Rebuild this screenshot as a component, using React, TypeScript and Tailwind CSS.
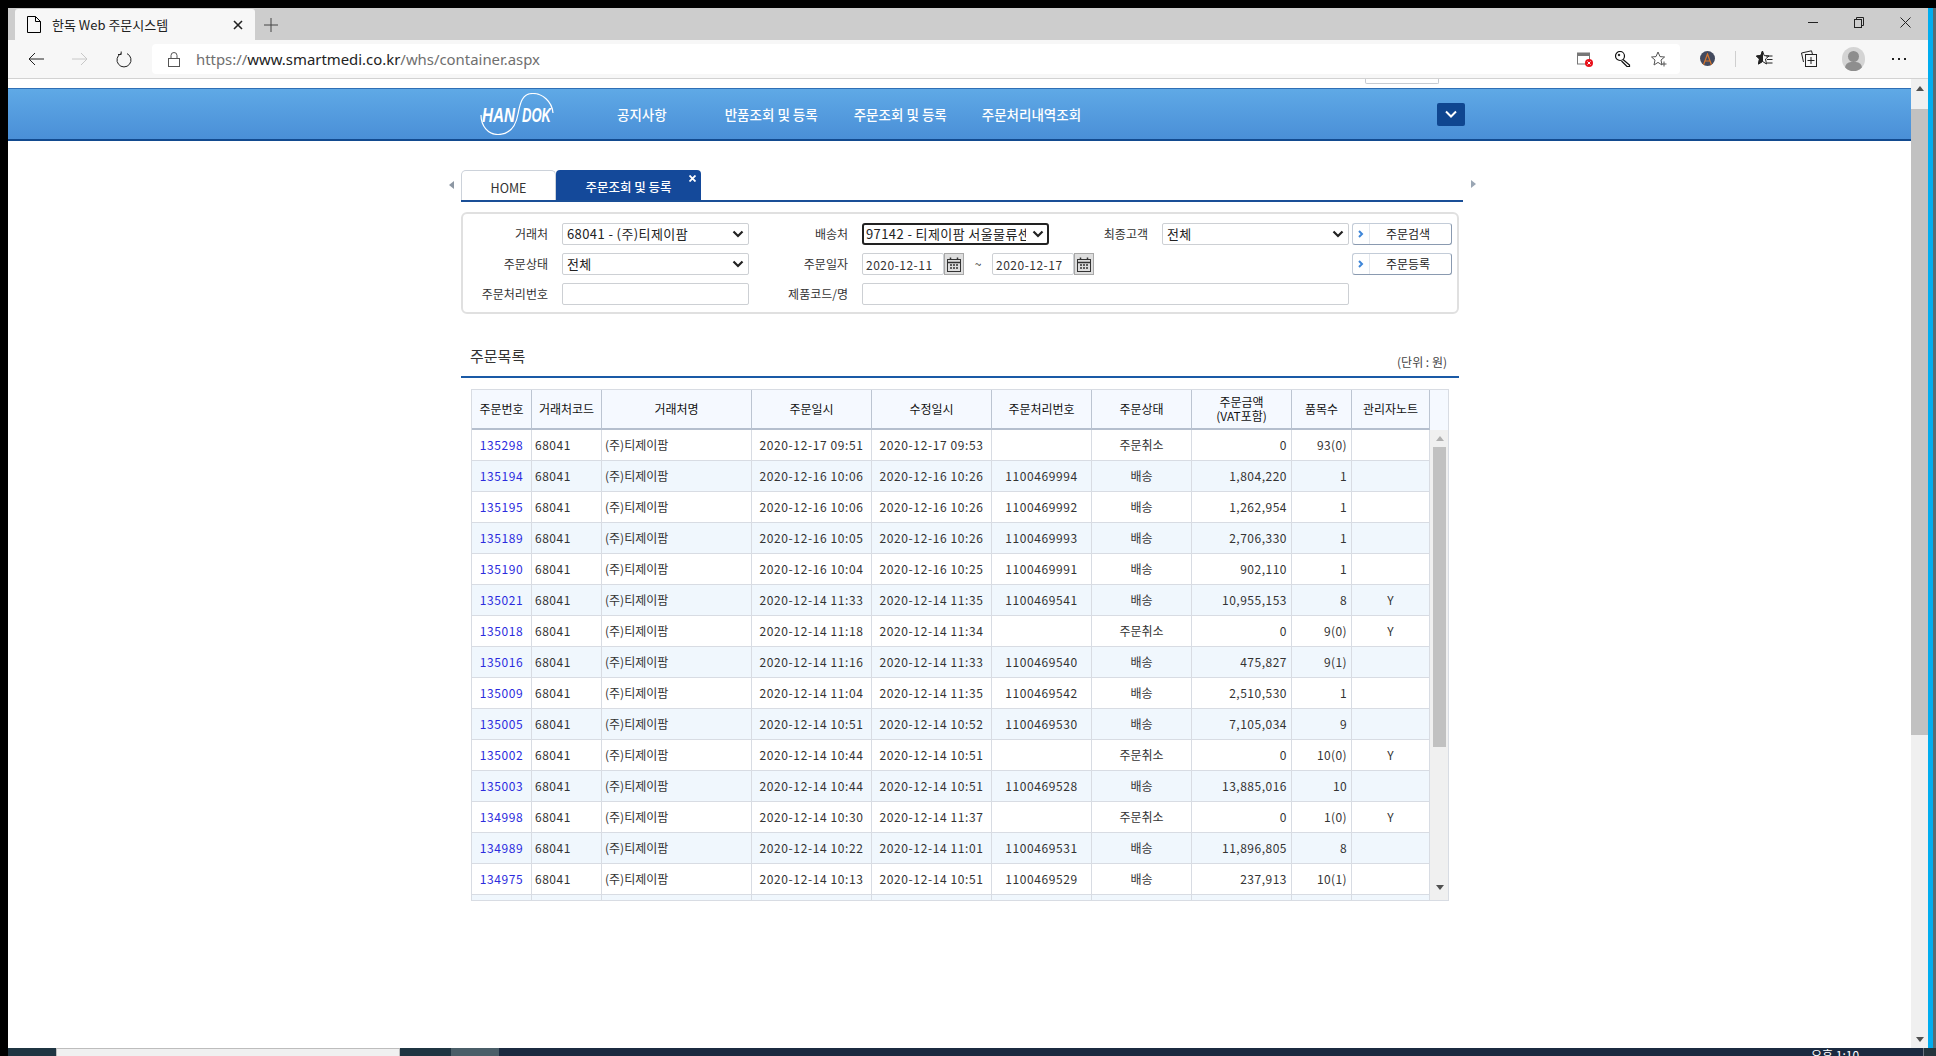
import React from "react";

type Row = [string, string, string, string, string, string, string, string];
const rows: Row[] = [
  ["135298", "2020-12-17 09:51", "2020-12-17 09:53", "", "주문취소", "0", "93(0)", ""],
  ["135194", "2020-12-16 10:06", "2020-12-16 10:26", "1100469994", "배송", "1,804,220", "1", ""],
  ["135195", "2020-12-16 10:06", "2020-12-16 10:26", "1100469992", "배송", "1,262,954", "1", ""],
  ["135189", "2020-12-16 10:05", "2020-12-16 10:26", "1100469993", "배송", "2,706,330", "1", ""],
  ["135190", "2020-12-16 10:04", "2020-12-16 10:25", "1100469991", "배송", "902,110", "1", ""],
  ["135021", "2020-12-14 11:33", "2020-12-14 11:35", "1100469541", "배송", "10,955,153", "8", "Y"],
  ["135018", "2020-12-14 11:18", "2020-12-14 11:34", "", "주문취소", "0", "9(0)", "Y"],
  ["135016", "2020-12-14 11:16", "2020-12-14 11:33", "1100469540", "배송", "475,827", "9(1)", ""],
  ["135009", "2020-12-14 11:04", "2020-12-14 11:35", "1100469542", "배송", "2,510,530", "1", ""],
  ["135005", "2020-12-14 10:51", "2020-12-14 10:52", "1100469530", "배송", "7,105,034", "9", ""],
  ["135002", "2020-12-14 10:44", "2020-12-14 10:51", "", "주문취소", "0", "10(0)", "Y"],
  ["135003", "2020-12-14 10:44", "2020-12-14 10:51", "1100469528", "배송", "13,885,016", "10", ""],
  ["134998", "2020-12-14 10:30", "2020-12-14 11:37", "", "주문취소", "0", "1(0)", "Y"],
  ["134989", "2020-12-14 10:22", "2020-12-14 11:01", "1100469531", "배송", "11,896,805", "8", ""],
  ["134975", "2020-12-14 10:13", "2020-12-14 10:51", "1100469529", "배송", "237,913", "10(1)", ""],
];

const widths = [60, 70, 150, 120, 120, 100, 100, 100, 60, 78];
const heads = ["주문번호", "거래처코드", "거래처명", "주문일시", "수정일시", "주문처리번호", "주문상태", "", "품목수", "관리자노트"];

const Stroke = ({ w, h, children, cls = "" }: { w: number; h: number; children: React.ReactNode; cls?: string }) => (
  <svg width={w} height={h} viewBox={`0 0 ${w} ${h}`} fill="none" stroke="currentColor" strokeWidth="1" className={`shrink-0 ${cls}`}>
    {children}
  </svg>
);

const Chevron = () => (
  <svg width="12" height="8" viewBox="0 0 12 8" fill="none" stroke="#222" strokeWidth="2.2" className="absolute right-[5px] top-[7px] pointer-events-none">
    <path d="M1.5 1.5 L6 6 L10.5 1.5" />
  </svg>
);

const Sel = ({ value, focus }: { value: string; focus?: boolean }) => (
  <div className="relative w-[187px] h-[22px]">
    <div
      role="combobox"
      className={`w-full h-full overflow-hidden whitespace-nowrap bg-white text-[13px] tracking-[0.4px] text-[#222] ${focus ? "border-2 border-[#222] pl-[2px] rounded-[3px] leading-[18px]" : "border border-[#cdd0d4] pl-[4px] rounded-[2px] leading-[20px]"}`}
    >
      <div className="w-[160px] overflow-hidden">{value}</div>
    </div>
    <Chevron />
  </div>
);

const Label = ({ w, children }: { w: string; children: React.ReactNode }) => (
  <div className={`${w} text-right text-[12px] text-[#333] pr-[14px] leading-[22px]`}>{children}</div>
);

const Txt = ({ w, value = "" }: { w: string; value?: string }) => (
  <input readOnly value={value} className={`${w} h-[22px] border border-[#cdd0d4] rounded-[2px] bg-white px-[3px] text-[12px] tracking-[0.5px] text-[#333]`} />
);

const Cal = () => (
  <div className="w-[20px] h-[22px] bg-[#dedede] border border-[#a8a8a8] flex items-center justify-center">
    <svg width="14" height="15" viewBox="0 0 14 15" fill="none" stroke="#333" strokeWidth="1">
      <rect x="0.5" y="2.5" width="13" height="12" />
      <path d="M0.5 5.5H13.5" strokeWidth="1.5" />
      <path d="M3.5 0.5V3M10.5 0.5V3" strokeWidth="1.5" />
      <path d="M3 8H5M6 8H8M9 8H11M3 11H5M6 11H8M9 11H11" strokeWidth="1.6" />
    </svg>
  </div>
);

const Btn = ({ children }: { children: React.ReactNode }) => (
  <div className="ml-[3px] w-[100px] h-[22px] border border-[#c3ccd8] border-b-[#8a9ab0] border-r-[#8a9ab0] rounded-[3px] flex bg-white">
    <div className="w-[17px] border-r border-[#e4e8ee] flex items-center justify-center">
      <svg width="6" height="8" viewBox="0 0 6 8" fill="none" stroke="#3f86d8" strokeWidth="2">
        <path d="M1 1 L4 4 L1 7" />
      </svg>
    </div>
    <div className="flex-1 text-center text-[12px] leading-[20px] text-[#222] pr-[5px]">{children}</div>
  </div>
);

const Tri = ({ up, color, w = 8, h = 5 }: { up?: boolean; color: string; w?: number; h?: number }) => (
  <svg width={w} height={h} viewBox="0 0 8 5" fill={color}>
    <path d={up ? "M4 0 L8 5 L0 5 Z" : "M0 0 L8 0 L4 5 Z"} />
  </svg>
);

export default function App() {
  return (
    <div className="flex w-[1936px] h-[1056px] overflow-hidden bg-black font-['Noto_Sans_CJK_KR','Noto_Sans',sans-serif]">
      <div className="w-[8px] shrink-0" />
      <div className="flex-1 flex flex-col min-w-0">
        <div className="h-[8px] shrink-0" />
        <div className="flex-1 flex min-h-0">
          <div className="w-[1920px] flex flex-col bg-white">
            {/* Tab strip */}
            <div className="h-[32px] bg-[#cdcdcd] flex items-end shrink-0">
              <div className="ml-[7px] w-[240px] h-[31px] bg-[#f7f7f7] rounded-t-[3px] flex items-center pl-[12px] text-black">
                <Stroke w={14} h={17}>
                  <path d="M0.5 0.5H8.5L13.5 5.5V16.5H0.5Z M8.5 0.5V5.5H13.5" />
                </Stroke>
                <span className="ml-[11px] text-[13px] leading-none text-[#222]">한독 Web 주문시스템</span>
                <svg width="10" height="10" viewBox="0 0 10 10" stroke="#222" strokeWidth="1.6" className="ml-auto mr-[12px]">
                  <path d="M1 1L9 9M9 1L1 9" />
                </svg>
              </div>
              <div className="ml-[9px] h-[31px] flex items-center text-[#444]">
                <Stroke w={14} h={14}>
                  <path d="M7 0V14M0 7H14" />
                </Stroke>
              </div>
            </div>
            {/* Toolbar */}
            <div className="h-[39px] bg-[#f7f7f7] border-b border-[#d2d2d2] flex items-start shrink-0">
              <div className="flex items-center h-[30px] mt-[4px] w-[144px] text-[#222]">
                <Stroke w={16} h={14} cls="ml-[20px]">
                  <path d="M16 7H1M7 1L1 7L7 13" />
                </Stroke>
                <Stroke w={16} h={14} cls="ml-[28px] text-[#c8c8c8]">
                  <path d="M0 7H15M9 1L15 7L9 13" />
                </Stroke>
                <Stroke w={16} h={17} cls="ml-[28px]">
                  <path d="M5 2.6A7 7 0 1 0 11 2.6M5.2 0.5V3.5H2" />
                </Stroke>
              </div>
              <div className="w-[1528px] h-[30px] mt-[4px] bg-white rounded-[4px] flex items-center">
                <Stroke w={12} h={15} cls="ml-[16px] text-[#555]">
                  <rect x="0.5" y="6.5" width="11" height="8" />
                  <path d="M3 6.5V3.5A3 3 0 0 1 9 3.5V6.5" />
                </Stroke>
                <div className="ml-[16px] text-[14.9px] leading-none font-['Noto_Sans',sans-serif] text-[#6f6f6f]">
                  https://<span className="text-[#222]">www.smartmedi.co.kr</span>/whs/container.aspx
                </div>
                <div className="ml-auto flex items-center text-[#555]">
                  <svg width="16" height="15" viewBox="0 0 16 15" className="mr-[22px]">
                    <rect x="0.5" y="1" width="12" height="11" fill="#fff" stroke="#777" />
                    <rect x="0" y="1" width="13" height="3" fill="#777" />
                    <circle cx="12" cy="11" r="4" fill="#e8101a" />
                    <path d="M10.5 9.5L13.5 12.5M13.5 9.5L10.5 12.5" stroke="#fff" />
                  </svg>
                  <Stroke w={16} h={16} cls="mr-[20px] text-[#111]">
                    <circle cx="5" cy="5" r="4.5" strokeWidth="1.2" />
                    <path d="M8 8.5L14.5 14V15.5H12L6.5 10" strokeWidth="1.2" />
                    <circle cx="4" cy="4" r="0.8" fill="currentColor" />
                  </Stroke>
                  <Stroke w={16} h={16} cls="mr-[13px]">
                    <path d="M7 1L9 5.6L13.6 6L10 9L11 14L7 11.4L3 14L4 9L0.5 6L5 5.6Z" />
                    <path d="M13 10.5V15.5M10.5 13H15.5" />
                  </Stroke>
                </div>
              </div>
              <div className="flex-1 h-[38px] relative flex items-center text-[#222]">
                <div className="ml-[20px] w-[15px] h-[15px] rounded-full bg-[#434a5e] flex items-center justify-center mt-[-1px]">
                  <svg width="11" height="12" viewBox="0 0 11 12" fill="none" stroke="#d9762b" strokeWidth="1.2">
                    <path d="M1.5 12L5.5 1L9.5 12M3 8H8" />
                  </svg>
                </div>
                <div className="ml-[20px] w-px h-[16px] bg-[#cfcfcf] mt-[-1px]" />
                <Stroke w={17} h={17} cls="ml-[20px] mt-[-1px]">
                  <path d="M6.5 1L8.2 5.6L13 6L9.5 9L10.5 14L6.5 11.4L2.5 14L3.5 9L0.5 6L4.8 5.6Z" />
                  <path d="M6.5 1V11.4L2.5 14L3.5 9L0.5 6L4.8 5.6Z" fill="#222" />
                  <path d="M10 6H16.5M11 9.5H16.5M11 13H16.5" />
                </Stroke>
                <Stroke w={16} h={17} cls="ml-[28px] mt-[-1px]">
                  <path d="M2.5 12L0.5 3L10.5 0.8L11.4 4" />
                  <rect x="4.5" y="4.5" width="11" height="12" fill="#f7f7f7" />
                  <path d="M10 7V14M6.5 10.5H13.5" />
                </Stroke>
                <div className="ml-[25px] w-[23px] h-[24px] rounded-[12px] bg-[#d4d4d4] overflow-hidden relative shrink-0">
                  <div className="absolute left-[6px] top-[4px] w-[11px] h-[11px] rounded-full bg-[#8e8e8e]" />
                  <div className="absolute left-[3px] top-[15px] w-[17px] h-[12px] rounded-full bg-[#8e8e8e]" />
                </div>
                <div className="ml-[27px] flex gap-[4px]">
                  <div className="w-[2px] h-[2px] bg-[#222]" />
                  <div className="w-[2px] h-[2px] bg-[#222]" />
                  <div className="w-[2px] h-[2px] bg-[#222]" />
                </div>
                {/* window controls lie over the tab strip */}
                <div className="absolute left-[128px] top-[-25px] flex items-center h-[14px] text-[#222]">
                  <Stroke w={10} h={11}>
                    <path d="M0 5.5H10" />
                  </Stroke>
                  <Stroke w={10} h={11} cls="ml-[36px]">
                    <rect x="0.5" y="2.5" width="7" height="8" />
                    <path d="M2.5 2.5V0.5H9.5V8.5H7.5" />
                  </Stroke>
                  <Stroke w={11} h={11} cls="ml-[36px]">
                    <path d="M0.5 0.5L10.5 10.5M10.5 0.5L0.5 10.5" />
                  </Stroke>
                </div>
              </div>
            </div>
            {/* Page */}
            <div className="flex-1 flex min-h-0">
              <div className="flex-1 min-w-0 overflow-hidden bg-white">
                <div className="h-[9px]">
                  <div className="ml-[1357px] w-[74px] h-[5px] border border-t-0 border-[#c8ccd2] rounded-b-[2px]" />
                </div>
                {/* Header band */}
                <div className="h-[53px] border-t border-[#2f6fb5] border-b-2 border-b-[#124a8f] bg-gradient-to-b from-[#5fa9e6] to-[#4a8fd7] flex items-center text-white">
                  <svg width="74" height="42" viewBox="0 0 74 42" fill="none" className="ml-[472px] mt-[-1px] shrink-0">
                    <path d="M73 20C72 8 62 0.5 53 0.5C41 0.5 40 12 38 21C36 32 31 41.5 18 41.5C8 41.5 1 33 1 22" stroke="#fff" strokeWidth="1.2" />
                    <text x="2" y="29" fill="#fff" fontFamily="Liberation Sans, sans-serif" fontStyle="italic" fontWeight="700" fontSize="20" textLength="33" lengthAdjust="spacingAndGlyphs">HAN</text>
                    <text x="42" y="29" fill="#fff" fontFamily="Liberation Sans, sans-serif" fontStyle="italic" fontWeight="700" fontSize="20" textLength="29" lengthAdjust="spacingAndGlyphs">DOK</text>
                  </svg>
                  <div className="ml-[63px] text-[13.5px] font-medium">공지사항</div>
                  <div className="ml-[58px] text-[13.5px] font-medium">반품조회 및 등록</div>
                  <div className="ml-[36px] text-[13.5px] font-medium">주문조회 및 등록</div>
                  <div className="ml-[35px] text-[13.5px] font-medium">주문처리내역조회</div>
                  <div className="ml-[356px] w-[28px] h-[23px] bg-[#0f4690] rounded-[2px] flex items-center justify-center">
                    <svg width="12" height="8" viewBox="0 0 12 8" fill="none" stroke="#fff" strokeWidth="2">
                      <path d="M1 1.5L6 6.5L11 1.5" />
                    </svg>
                  </div>
                </div>
                {/* Tabs */}
                <div className="mt-[31px] ml-[432px] flex items-center">
                  <div className="w-[13px] mt-[-4px] pl-[9px]">
                    <svg width="5" height="8" viewBox="0 0 5 8" fill="#8d97a3"><path d="M5 0V8L0 4Z" /></svg>
                  </div>
                  <div className="ml-[8px] w-[1002px] h-[30px] border-b-2 border-[#1a4f97] flex items-end">
                    <div className="w-[95px] h-[30px] border border-b-0 border-[#ccd2da] rounded-t-[5px] text-center text-[12.5px] leading-[33px] text-[#333]">HOME</div>
                    <div className="relative w-[145px] h-[30px] bg-[#14499a] rounded-t-[4px] text-center text-white text-[12.5px] font-medium leading-[33px]">
                      주문조회 및 등록
                      <svg width="7" height="7" viewBox="0 0 7 7" stroke="#fff" strokeWidth="1.8" className="absolute left-[133px] top-[5px]">
                        <path d="M0.5 0.5L6.5 6.5M6.5 0.5L0.5 6.5" />
                      </svg>
                    </div>
                  </div>
                  <div className="ml-[8px] mt-[-6px]">
                    <svg width="5" height="8" viewBox="0 0 5 8" fill="#9aa6b4"><path d="M0 0V8L5 4Z" /></svg>
                  </div>
                </div>
                {/* Search form */}
                <div className="mt-[10px] ml-[453px] w-[998px] h-[102px] border-2 border-[#e0e0e0] rounded-[6px] pt-[9px] flex flex-col gap-[8px]">
                  <div className="flex h-[22px]">
                    <Label w="w-[99px]">거래처</Label>
                    <Sel value="68041 - (주)티제이팜" />
                    <Label w="w-[113px]">배송처</Label>
                    <Sel value="97142 - 티제이팜 서울물류센터" focus />
                    <Label w="w-[113px]">최종고객</Label>
                    <Sel value="전체" />
                    <Btn>주문검색</Btn>
                  </div>
                  <div className="flex h-[22px]">
                    <Label w="w-[99px]">주문상태</Label>
                    <Sel value="전체" />
                    <Label w="w-[113px]">주문일자</Label>
                    <Txt w="w-[82px]" value="2020-12-11" />
                    <Cal />
                    <div className="w-[28px] text-center text-[12px] leading-[22px] text-[#333]">~</div>
                    <Txt w="w-[82px]" value="2020-12-17" />
                    <Cal />
                    <div className="w-[255px]" />
                    <Btn>주문등록</Btn>
                  </div>
                  <div className="flex h-[22px]">
                    <Label w="w-[99px]">주문처리번호</Label>
                    <Txt w="w-[187px]" />
                    <Label w="w-[113px]">제품코드/명</Label>
                    <Txt w="w-[487px]" />
                  </div>
                </div>
                {/* Section heading */}
                <div className="mt-[26px] ml-[453px] w-[998px] h-[38px] border-b-2 border-[#1a5aa6] flex items-end justify-between">
                  <div className="pl-[9px] pb-[10px] text-[15px] leading-[20px] text-[#333]">주문목록</div>
                  <div className="pr-[12px] pb-[6px] text-[12px] leading-[16px] text-[#444]">(단위 : 원)</div>
                </div>
                {/* Table */}
                <div className="mt-[11px] ml-[463px] w-[978px] h-[512px] border border-[#d8dce3] flex overflow-hidden">
                  <table className="table-fixed border-separate border-spacing-0 w-[958px] shrink-0 self-start text-[12px] text-[#333]">
                    <colgroup>
                      {widths.map((w, i) => (
                        <col key={i} style={{ width: w }} />
                      ))}
                    </colgroup>
                    <thead>
                      <tr>
                        {heads.map((h, i) => (
                          <th key={i} className="h-[40px] p-0 bg-[#f5f9ff] border-r border-r-[#bcc5d2] border-b-2 border-b-[#b5bfce] text-center font-normal text-[#111] leading-[14px] whitespace-nowrap">
                            {i === 7 ? (
                              <span>
                                주문금액
                                <br />
                                (VAT포함)
                              </span>
                            ) : (
                              h
                            )}
                          </th>
                        ))}
                      </tr>
                    </thead>
                    <tbody>
                      {[...rows, null].map((r, idx) => {
                        const bg = idx % 2 === 1 ? "bg-[#f0f7fd]" : "bg-white";
                        const td = `h-[31px] p-0 pb-[1px] border-r border-b border-[#d8dce3] whitespace-nowrap ${bg}`;
                        if (!r) {
                          return (
                            <tr key={idx}>
                              {widths.map((_, i) => (
                                <td key={i} className={td} />
                              ))}
                            </tr>
                          );
                        }
                        return (
                          <tr key={idx}>
                            <td className={`${td} text-center tracking-[0.6px] text-[#2b2bdd]`}>{r[0]}</td>
                            <td className={`${td} pl-[3px] tracking-[0.5px]`}>68041</td>
                            <td className={`${td} pl-[3px]`}>(주)티제이팜</td>
                            <td className={`${td} text-center tracking-[0.6px]`}>{r[1]}</td>
                            <td className={`${td} text-center tracking-[0.6px]`}>{r[2]}</td>
                            <td className={`${td} text-center tracking-[0.6px]`}>{r[3]}</td>
                            <td className={`${td} text-center`}>{r[4]}</td>
                            <td className={`${td} text-right pr-[4px] tracking-[0.5px]`}>{r[5]}</td>
                            <td className={`${td} text-right pr-[4px] tracking-[0.4px]`}>{r[6]}</td>
                            <td className={`${td} text-center`}>{r[7]}</td>
                          </tr>
                        );
                      })}
                    </tbody>
                  </table>
                  <div className="flex-1 flex flex-col">
                    <div className="h-[40px] bg-[#f5f9ff] shrink-0" />
                    <div className="flex-1 bg-[#f0f0f0] flex flex-col">
                      <div className="h-[17px] flex items-center justify-center pl-[1px]">
                        <Tri up color="#b0b0b0" />
                      </div>
                      <div className="ml-[3px] w-[13px] h-[300px] bg-[#c1c1c1]" />
                      <div className="mt-auto h-[15px] flex items-start justify-center pl-[1px]">
                        <Tri color="#505050" />
                      </div>
                    </div>
                  </div>
                </div>
              </div>
              {/* Page scrollbar */}
              <div className="w-[17px] bg-[#f0f0f0] flex flex-col items-center shrink-0">
                <div className="h-[30px] pt-[7px]">
                  <Tri up color="#505050" />
                </div>
                <div className="w-[17px] h-[626px] bg-[#c1c1c1]" />
                <div className="mt-auto pb-[6px]">
                  <Tri color="#505050" />
                </div>
              </div>
            </div>
          </div>
          <div className="w-[5px] bg-[#00adef] shrink-0" />
          <div className="w-[3px] bg-[#5a6a70] shrink-0" />
        </div>
        {/* Taskbar */}
        <div className="h-[8px] shrink-0 flex overflow-hidden bg-[#1f3542]">
          <div className="w-[48px] shrink-0" />
          <div className="w-[344px] bg-[#f0f0f0] border-t border-x border-[#bdbdbd]" />
          <div className="w-[51px] shrink-0" />
          <div className="w-[48px] bg-[#4a5e68] shrink-0" />
          <div className="flex-1 bg-[#1b2a40] pl-[1312px] text-white text-[12px] leading-[12px] pt-[1px] whitespace-nowrap">오후 1:10</div>
          <div className="w-px bg-[#6a7480]" />
          <div className="w-[12px] bg-[#24343c]" />
        </div>
      </div>
    </div>
  );
}
